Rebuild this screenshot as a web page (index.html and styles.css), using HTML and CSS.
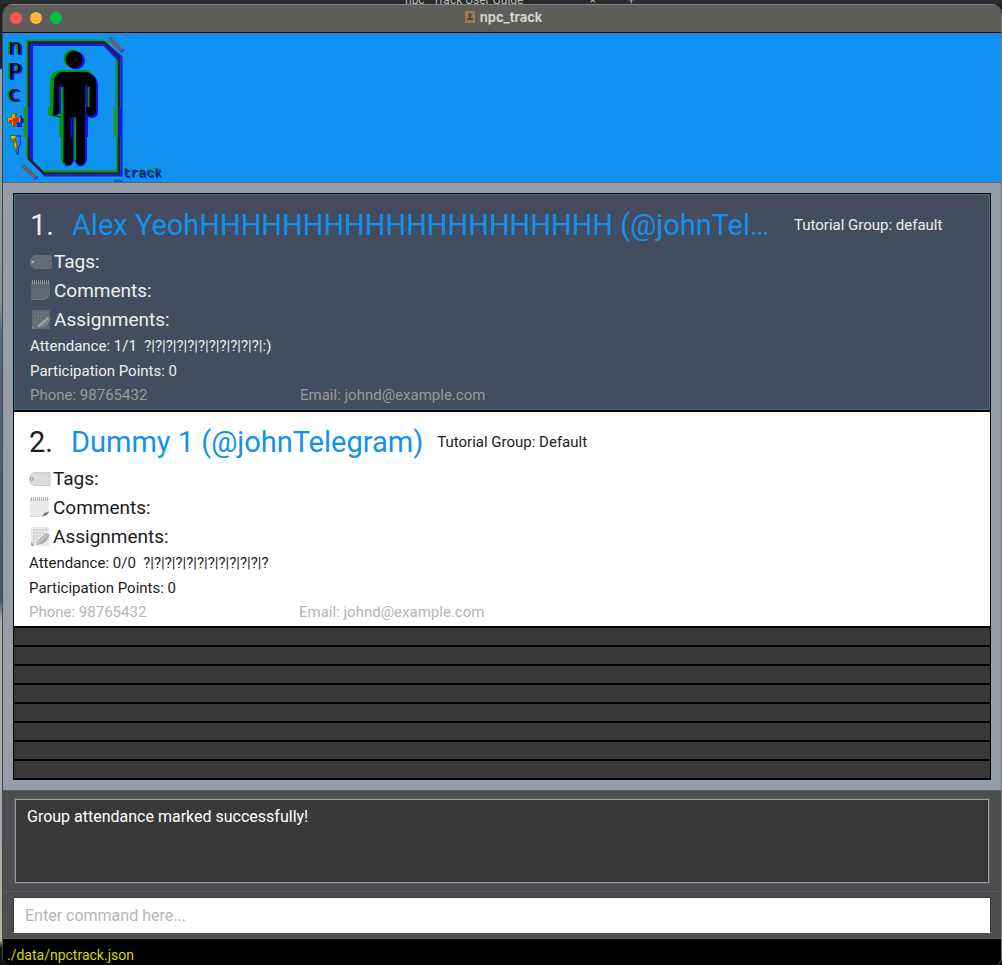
FILE: index.html
```html
<!DOCTYPE html>
<html lang="en">
<head>
<meta charset="utf-8">
<title>npc_track</title>
<link rel="stylesheet" href="styles.css">
</head>
<body>
<svg class="defs" width="0" height="0" aria-hidden="true">
  <defs>
    <symbol id="tag" viewBox="0 0 22 22">
      <path d="M4 4H21Q22 4 22 5V17Q22 18 21 18H4L0 14V8Z" fill="#aaa" opacity=".42"/>
      <circle cx="2.7" cy="11" r="1.5" fill="#ddd" stroke="#777" stroke-width=".7"/>
      <path d="M5 5H21M5 17.5H21" stroke="#888" stroke-width=".5" opacity=".4"/>
    </symbol>
    <symbol id="pad" viewBox="0 0 22 22">
      <path d="M1 2H20V15L15 20H1Z" fill="#bbb" opacity=".3"/>
      <path d="M2.500 0V4M4.500 0V4M6.500 0V4M8.500 0V4M10.500 0V4M12.500 0V4M14.500 0V4M16.500 0V4M18.500 0V4" stroke="#aaa" stroke-width="1" opacity=".9"/>
      <path d="M13 19L15.500 16L20 14.500Q19 19 13 19Z" class="fold"/>
      <path d="M1 19.500H14" stroke="#aaa" stroke-width=".6" opacity=".5"/>
    </symbol>
    <symbol id="memo" viewBox="0 0 22 22">
      <path d="M2 1H20V20H2Z" fill="#bbb" opacity=".32"/>
      <path d="M4 4H18M4 7H16M4 10H13M4 13H10M4 16H9" stroke="#999" stroke-width="1" stroke-dasharray="2 1" opacity=".65"/>
      <path d="M7 19L9 14.500L17 7L20.500 8.500Q20 14 13 18Z" fill="#999" opacity=".75"/>
      <path d="M8.500 17.500L18 9" stroke="#ccc" stroke-width="1.500"/>
      <path d="M2 16Q5 17 5 20H2Z" fill="#999" opacity=".7"/>
    </symbol>
  </defs>
</svg>
<div class="desktop">
  <div class="backdrop" aria-hidden="true"><span>npc_ Track User Guide</span><span class="tab-close">×</span><span class="tab-add">+</span></div>
  <main class="window">
    <header class="titlebar">
      <div class="lights">
        <button class="light close" aria-label="Close"></button>
        <button class="light minimize" aria-label="Minimize"></button>
        <button class="light zoom" aria-label="Zoom"></button>
      </div>
      <h1 class="title">
        <svg width="14" height="14" viewBox="0 0 14 14" aria-hidden="true"><rect x="1" y="1" width="12" height="12" rx="1" fill="#967d58"/><path d="M1 1H3V13H1Z" fill="#65594a"/><circle cx="8" cy="5" r="1.800" fill="#544836"/><path d="M7.200 6H8.800V7.500L11 8.500V10H5V8.500L7.200 7.500Z" fill="#544836"/></svg>
        npc_track
      </h1>
    </header>
    <div class="banner">
      <svg class="logo" width="162" height="149" viewBox="3 33 162 149" role="img" aria-label="npc_track logo">
        <g class="logo-letters"><text x="8" y="54">n</text><text x="8" y="79">P</text><text x="8" y="101">c</text></g>
        <path d="M16 118H20V115H22V118H24V123H22V127H17V124H15Z" fill="#1010e0"/>
        <path d="M11 113H17V118H21V123H16V127H11V123H7V118H11Z" fill="#109018"/>
        <path d="M12 114H15V118H20V122H15V126H12V122H8V118H12Z" fill="#ff9a00"/>
        <path d="M13 118H19V122H15V126H13V122H9V120H13Z" fill="#ff1808"/>
        <path d="M14 136H21L20 138L21 144L19 146L18 155L16 151L14 143Z" fill="none" stroke="#1010ee"/>
        <path d="M10 135H17L16 140L18 145L17 153L13 146L14 143L10 138Z" fill="#108b20"/>
        <path d="M11 136H16L14 140L17 144L16 150L14 144L15 142L11 138Z" fill="#ffb000"/>
        <path d="M13 138L15 142M16 141L17 148" stroke="#f21" stroke-width="1"/>
        <g fill="none" stroke-width="3">
          <path d="M31.500 161V44.500H104L119 60" stroke="#1018ff" stroke-width="3"/>
          <path d="M30 160L45 175.500H121.500V57L105 43" stroke="#1018ff" stroke-width="2"/>
          <path d="M27 107V40.500H104L109 43M27 137V158M43 171H117V137M116.500 107V60" stroke="#169520" stroke-width="2"/>
          <path d="M25.500 107V137M115.500 107V137" stroke="#209820" stroke-width="4"/>
          <path d="M29 42.500H104L119 57V173.500H44L29 159Z" stroke="#242428" stroke-width="2.500"/>
          <path d="M29.500 107V137M120.500 107V137" stroke="#1018ff" stroke-width="3"/>
        </g>
        <path d="M110 39L122 51M23 166L36 178" stroke="#62646a" stroke-width="4"/>
        <path d="M109 40L112 38M22 167L25 165" stroke="#208840" stroke-width="2"/>
        <path d="M121 52L124 50M35 179L38 177" stroke="#1838ff" stroke-width="2"/>
        <g fill="#009a08">
          <circle cx="72.500" cy="58.500" r="9"/>
          <path d="M50 107V82Q50 70 62 70H84Q94 70 94 82V115H84V87H62V112Q58 119 50 116L48 114V107ZM61 107H59V137H61V161Q62 166 68 165Q73 164 74 160V117H79V164H75V100H61Z"/>
        </g>
        <g fill="#1010f5">
          <circle cx="76" cy="60.500" r="9"/>
          <path d="M55 116Q60 119 62 114V75H85Q98 73 98 86V114Q95 120 88 117V85V137H87V160Q85 168 78 166L74 160Q72 168 65 166L65 85V116Z"/>
        </g>
        <circle cx="74" cy="59.500" r="8.500"/>
        <path d="M54 80Q56 72 63 72H87Q95 74 96 82V112Q94 117 88 116L86 112V87H85V160Q84 165 81 165Q76 164 76 160V117H73V160Q72 165 69 165Q64 164 63 161V87H61V85H59V112Q58 116 53 116Z"/>
        <path d="M60 85V114M86 85V107M71.500 118V137" stroke="#1010f5" stroke-width="2"/>
        <path d="M62.500 87V160M75 118V160M88.500 87V107" stroke="#00960d" stroke-width="2"/>
        <text class="logo-track" x="123" y="177">track</text>
        <path d="M112 179.500H120" stroke="#109030"/><path d="M114 181H123" stroke="#1010ff"/>
      </svg>
    </div>
    <section class="list-pane">
      <ol class="people">
        <li class="person selected">
          <div class="name-row"><span class="index">1.</span><h2 class="name">Alex YeohHHHHHHHHHHHHHHHHHHHH (@johnTelegram)</h2><span class="group">Tutorial Group: default</span></div>
          <div class="field"><svg class="icon"><use href="#tag"/></svg>Tags:</div>
          <div class="field"><svg class="icon"><use href="#pad"/></svg>Comments:</div>
          <div class="field"><svg class="icon"><use href="#memo"/></svg>Assignments:</div>
          <div class="detail">Attendance: 1/1&nbsp; ?|?|?|?|?|?|?|?|?|?|?|:)</div>
          <div class="detail">Participation Points: 0</div>
          <div class="contact"><span class="phone">Phone: 98765432</span><span>Email: johnd@example.com</span></div>
        </li>
        <li class="person">
          <div class="name-row"><span class="index">2.</span><h2 class="name">Dummy 1 (@johnTelegram)</h2><span class="group">Tutorial Group: Default</span></div>
          <div class="field"><svg class="icon"><use href="#tag"/></svg>Tags:</div>
          <div class="field"><svg class="icon"><use href="#pad"/></svg>Comments:</div>
          <div class="field"><svg class="icon"><use href="#memo"/></svg>Assignments:</div>
          <div class="detail">Attendance: 0/0&nbsp; ?|?|?|?|?|?|?|?|?|?|?|?</div>
          <div class="detail">Participation Points: 0</div>
          <div class="contact"><span class="phone">Phone: 98765432</span><span>Email: johnd@example.com</span></div>
        </li>
        <li class="empty"></li><li class="empty"></li><li class="empty"></li><li class="empty"></li><li class="empty"></li><li class="empty"></li><li class="empty"></li><li class="empty"></li>
      </ol>
    </section>
    <section class="result-pane">
      <output class="result">Group attendance marked successfully!</output>
    </section>
    <form class="command-pane">
      <input class="command" type="text" aria-label="Command" placeholder="Enter command here...">
    </form>
    <footer class="status">./data/npctrack.json</footer>
  </main>
</div>
</body>
</html>
```
FILE: styles.css
```css
* { box-sizing: border-box; }
body {
  margin: 0;
  background: #25272a;
  font-family: Roboto, "Liberation Sans", sans-serif;
}
.defs { position: absolute; }
.desktop {
  min-height: 100vh;
  display: flex;
  flex-direction: column;
  background: linear-gradient(#222 0, #222 68px, #9da3a8 70px, #7f9890 300px, #536788 340px, #456 600px, #aaa 620px, #aaa 830px, #bab391 940px, #111 948px);
}
.backdrop {
  height: 4px;
  overflow: hidden;
  display: flex;
  padding-left: 405px;
  background: #292b2e;
  color: #b8b8b8;
  font-size: 12px;
  line-height: 1px;
}
.tab-close { margin-left: 66px; }
.tab-add { margin-left: 32px; }
.window {
  flex: 1;
  display: flex;
  flex-direction: column;
  margin-left: 2px;
  border-left: 1px solid #44484c;
  border-right: 1px solid #77787a;
  border-radius: 10px 10px 8px 8px;
  overflow: hidden;
  background: #000;
}
.titlebar {
  display: grid;
  grid-template-columns: 1fr auto 1fr;
  align-items: center;
  height: 29px;
  padding: 0 7px;
  background: #5d5d5a;
  border-top: 1px solid #858582;
  border-bottom: 1px solid #000;
}
.lights { display: flex; gap: 8px; margin-bottom: 2px; }
.light { width: 12px; height: 12px; padding: 0; border: 0; border-radius: 50%; }
.close { background: #ff5454; }
.minimize { background: #ffb43c; }
.zoom { background: #00c441; }
.title {
  display: flex;
  align-items: center;
  gap: 4px;
  margin: 0 0 3px;
  color: #d4d4d2;
  font: 700 13px Inter, "Liberation Sans", sans-serif;
}
.banner {
  height: 150px;
  background: #1192f0;
  border-bottom: 1px solid #62656a;
}
.logo { display: block; }
.logo-letters {
  font: 22px "DejaVu Sans", sans-serif;
  filter: drop-shadow(-2px 0 0 #009a08) drop-shadow(2px 1px 0 #1010ff);
}
.logo-track {
  font: 13px "Liberation Mono", monospace;
  fill: #102080;
  filter: drop-shadow(-1px -1px 0 #009a08) drop-shadow(1px 1px 0 #1010ff);
}
.list-pane {
  flex: 1;
  padding: 10px;
  background: #979da5;
}
.people {
  margin: 0;
  padding: 0;
  list-style: none;
  border: 1px solid #000;
  border-bottom: 0;
}
.person {
  padding: 11px 15px 3px;
  background: #fff;
  color: #1c1c1c;
  border-bottom: 2px solid #000;
}
.selected {
  padding: 12px 16px 4px;
  background: #434d5f;
  color: #efefef;
  box-shadow: inset 0 0 0 1px #367989;
}
.name-row { display: flex; align-items: center; height: 37px; margin-bottom: 4px; }
.index { font-size: 29px; margin-right: 18px; }
.name {
  flex: 0 1 auto;
  min-width: 0;
  max-width: 708px;
  margin: 0 14px 0 0;
  overflow: hidden;
  text-overflow: ellipsis;
  white-space: nowrap;
  color: #1192f0;
  font-size: 29px;
  font-weight: 400;
}
.group, .detail, .contact { font-size: 15px; }
.group { white-space: nowrap; }
.field { display: flex; align-items: center; gap: 2px; height: 29px; font-size: 19px; }
.icon { width: 22px; height: 22px; }
.fold { fill: #777; }
.selected .fold { fill: #bbb; }
.selected .icon { opacity: .8; }
.detail { line-height: 25px; }
.contact { display: flex; line-height: 22px; color: #b4b4b4; }
.selected .contact { color: #9b9b9b; }
.phone { width: 270px; }
.empty { height: 19px; background: #383838; border-bottom: 2px solid #000; }
.result-pane {
  padding: 8px 12px;
  background: #4d4e50;
  border-top: 1px solid #5d6062;
}
.result {
  display: block;
  height: 84px;
  padding: 7px 11px;
  background: #383838;
  border: 1px solid #979da5;
  outline: 1px solid #5d5f62;
  color: #fff;
  font-size: 16px;
  line-height: 20px;
}
.command-pane {
  padding: 5px 10px;
  background: #4d4e50;
  border-top: 1px solid #5b5c5e;
  border-bottom: 1px solid #5d5e60;
}
.command {
  display: block;
  width: 100%;
  height: 36px;
  padding: 0 11px;
  border: 1px solid #383838;
  border-bottom-color: #fff;
  border-radius: 0;
  background: #fff;
  font: 16px Roboto, "Liberation Sans", sans-serif;
}
.command::placeholder { color: #b6b6b6; opacity: 1; }
.status {
  height: 26px;
  padding: 6px 4px 0;
  background: #000;
  color: #d6d600;
  font-size: 14px;
  line-height: 20px;
}
```
